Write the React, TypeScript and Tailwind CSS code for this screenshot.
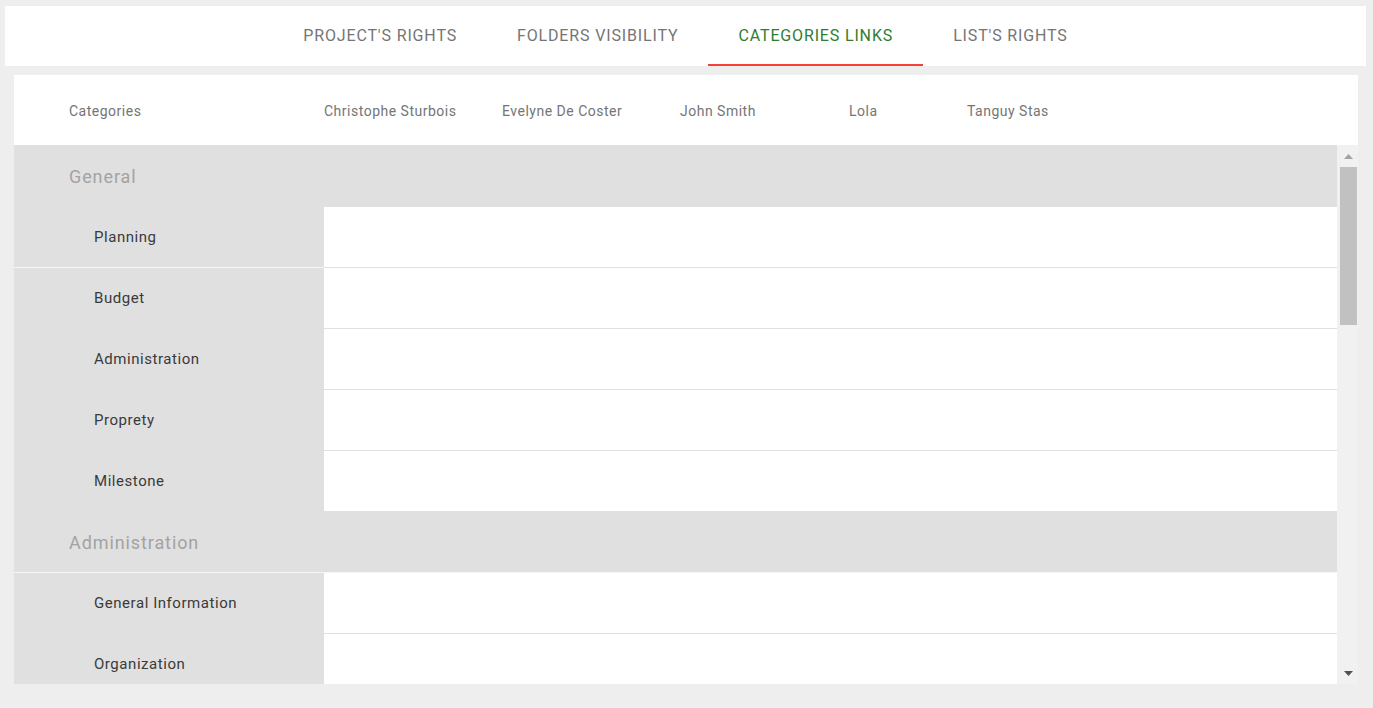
import React from 'react'

const tabs = ["PROJECT'S RIGHTS", 'FOLDERS VISIBILITY', 'CATEGORIES LINKS', "LIST'S RIGHTS"]

const members = [
  { name: 'Christophe Sturbois', w: 'w-[178px]' },
  { name: 'Evelyne De Coster', w: 'w-[178px]' },
  { name: 'John Smith', w: 'w-[169px]' },
  { name: 'Lola', w: 'w-[118px]' },
  { name: 'Tanguy Stas', w: 'w-[120px]' },
]

type Row =
  | { kind: 'group'; label: string; h: string; line?: boolean }
  | { kind: 'item'; label: string; line?: boolean }

const rows: Row[] = [
  { kind: 'group', label: 'General', h: 'h-[62px]' },
  { kind: 'item', label: 'Planning', line: true },
  { kind: 'item', label: 'Budget' },
  { kind: 'item', label: 'Administration' },
  { kind: 'item', label: 'Proprety' },
  { kind: 'item', label: 'Milestone' },
  { kind: 'group', label: 'Administration', h: 'h-[61px]', line: true },
  { kind: 'item', label: 'General Information' },
  { kind: 'item', label: 'Organization' },
]

export default function App() {
  const active = 'CATEGORIES LINKS'

  return (
    <div
      className="h-[708px] w-[1373px] overflow-hidden bg-[#eeeeee] pt-[6px]"
      style={{ fontFamily: 'Roboto, "Liberation Sans", sans-serif' }}
    >
      {/* Tabs */}
      <div className="ml-[5px] mr-[7px] flex h-[60px] justify-center bg-white">
        {tabs.map((t) => (
          <div
            key={t}
            className={`flex items-center border-b-2 px-[30px] pt-[2px] text-[16px] tracking-[0.85px] ${
              t === active ? 'border-[#f44336] text-[#2e7d32]' : 'border-transparent text-[#757575]'
            }`}
          >
            {t}
          </div>
        ))}
      </div>

      {/* Card */}
      <div className="ml-[14px] mr-[15px] mt-[9px] flex h-[609px] flex-col bg-white">
        {/* Header */}
        <div className="flex h-[70px] shrink-0 items-center pt-[2px] text-[14px] tracking-[0.5px] text-[#757575]">
          <div className="w-[310px] pl-[55px]">Categories</div>
          {members.map((m) => (
            <div key={m.name} className={m.w}>
              {m.name}
            </div>
          ))}
        </div>

        {/* Body */}
        <div className="flex min-h-0 flex-1">
          <div className="min-w-0 flex-1 overflow-hidden">
            {rows.map((r, i) =>
              r.kind === 'group' ? (
                <div
                  key={i}
                  className={`box-border flex ${r.h} items-center bg-[#e0e0e0] pl-[55px] text-[18px] tracking-[0.9px] text-[#a3a3a3] ${
                    r.line ? 'border-b border-[#f5f5f5]' : ''
                  }`}
                >
                  {r.label}
                </div>
              ) : (
                <div key={i} className="flex h-[61px]">
                  <div
                    className={`box-border flex w-[310px] shrink-0 items-center bg-[#e0e0e0] pl-[80px] text-[15px] tracking-[0.55px] text-[#3a3a3a] ${
                      r.line ? 'border-b border-[#f5f5f5]' : ''
                    }`}
                  >
                    {r.label}
                  </div>
                  <div className="box-border flex-1 border-b border-[#e0e0e0] bg-white" />
                </div>
              )
            )}
          </div>

          {/* Scrollbar */}
          <div className="flex w-[21px] shrink-0 flex-col items-center bg-[#f1f1f1]">
            <div className="flex h-[22px] w-full items-center justify-center pl-[2px]">
              <svg width="9" height="5" viewBox="0 0 9 5">
                <path d="M4.5 0 L9 5 L0 5 Z" fill="#a3a3a3" />
              </svg>
            </div>
            <div className="ml-[2px] h-[158px] w-[17px] bg-[#c1c1c1]" />
            <div className="flex-1" />
            <div className="flex h-[22px] w-full items-center justify-center pl-[2px]">
              <svg width="9" height="5" viewBox="0 0 9 5">
                <path d="M0 0 L9 0 L4.5 5 Z" fill="#505050" />
              </svg>
            </div>
          </div>
        </div>
      </div>
    </div>
  )
}
